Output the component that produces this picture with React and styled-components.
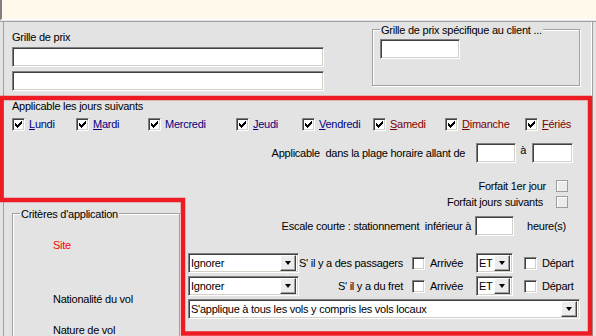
import styled, { createGlobalStyle } from "styled-components";

const GlobalStyle = createGlobalStyle`
  html, body {
    margin: 0;
    padding: 0;
    background: #e3e3e3;
  }
  * {
    box-sizing: border-box;
  }
`;

// classic 7x7 windows tick
const TICK = [
  "......X",
  ".....XX",
  "X...XXX",
  "XX.XXX.",
  "XXXXX..",
  ".XXX...",
  "..X....",
];

const tickPath = TICK.map((row, y) =>
  row
    .split("")
    .map((c, x) => (c === "X" ? `M${x + 2} ${y + 2}h1v1h-1z` : ""))
    .join("")
).join("");

const days = [
  { name: "Lundi", width: 64, key: true },
  { name: "Mardi", width: 72, key: true },
  { name: "Mercredi", width: 88, key: false },
  { name: "Jeudi", width: 66, key: true },
  { name: "Vendredi", width: 71, key: true },
  { name: "Samedi", width: 72, key: true, weekend: true },
  { name: "Dimanche", width: 80, key: true, weekend: true },
  { name: "Fériés", width: 60, key: true, weekend: true },
];

function CheckBox({ checked }) {
  return (
    <Check>
      {checked && (
        <svg width="11" height="11" viewBox="0 0 11 11">
          <path d={tickPath} fill="#000" />
        </svg>
      )}
    </Check>
  );
}

function Select({ width, children }) {
  return (
    <SelectBox $width={width}>
      <SelectText>{children}</SelectText>
      <DropButton>
        <Arrow />
      </DropButton>
    </SelectBox>
  );
}

function ConditionRow({ label, first }) {
  return (
    <SelectRow $first={first}>
      <Select width={111}>Ignorer</Select>
      <CondLabel>{label}</CondLabel>
      <CheckSpacer $left={9}>
        <CheckBox />
      </CheckSpacer>
      <SmallLabel $width={46}>Arrivée</SmallLabel>
      <Select width={37}>ET</Select>
      <CheckSpacer $left={11}>
        <CheckBox />
      </CheckSpacer>
      <SmallLabel>Départ</SmallLabel>
    </SelectRow>
  );
}

export default function App() {
  return (
    <Screen>
      <GlobalStyle />
      <TopStrip />
      <Separator />
      <Body>
        <TopSection>
          <PriceColumn>
            <FieldLabel>Grille de prix</FieldLabel>
            <TextBox $width={312} />
            <TextBox $width={312} />
          </PriceColumn>
          <Group $width={209} $bottom={26}>
            <Legend>Grille de prix spécifique au client ...</Legend>
            <TextBox $width={80} />
          </Group>
        </TopSection>

        <DaysTitle>Applicable les jours suivants</DaysTitle>
        <DayRow>
          {days.map((d) => (
            <DayItem key={d.name} $width={d.width}>
              <CheckBox checked />
              <DayName $weekend={d.weekend}>
                {d.key ? (
                  <>
                    <u>{d.name[0]}</u>
                    {d.name.slice(1)}
                  </>
                ) : (
                  d.name
                )}
              </DayName>
            </DayItem>
          ))}
        </DayRow>

        <TimeRow>
          <Text>{"Applicable  dans la plage horaire allant de"}</Text>
          <TextBox $width={40} />
          <Raised>à</Raised>
          <TextBox $width={41} />
        </TimeRow>

        <BottomSection>
          <CriteriaColumn>
            <Group $width={168} $bottom={0} $tall>
              <Legend>Critères d'application</Legend>
              <CriteriaLabel $top={16} $red>
                Site
              </CriteriaLabel>
              <CriteriaLabel $top={41}>Nationalité du vol</CriteriaLabel>
              <CriteriaLabel $top={18}>Nature de vol</CriteriaLabel>
            </Group>
          </CriteriaColumn>

          <RightColumn>
            <FlagRow $gap={10}>
              <Text>Forfait 1er jour</Text>
              <DisabledCheck />
            </FlagRow>
            <FlagRow $gap={13} $top={2}>
              <Text>Forfait jours suivants</Text>
              <DisabledCheck />
            </FlagRow>
            <EscaleRow>
              <Text>{"Escale courte : stationnement  inférieur à"}</Text>
              <TextBox $width={39} />
              <Text>heure(s)</Text>
            </EscaleRow>
            <ConditionRow label="S' il y a des passagers" first />
            <ConditionRow label="S' il y a du fret" />
            <SelectRow>
              <Select width={392}>
                S'applique à tous les vols y compris les vols locaux
              </Select>
            </SelectRow>
          </RightColumn>
        </BottomSection>
      </Body>

      <Highlight width="596" height="336" viewBox="0 0 596 336">
        <polygon
          points="1.5,98 590,98 590,333.5 183,333.5 183,200 1.5,200"
          fill="none"
          stroke="#ed1c24"
          strokeWidth="4.5"
        />
      </Highlight>
    </Screen>
  );
}

const Screen = styled.div`
  position: relative;
  width: 596px;
  height: 336px;
  overflow: hidden;
  background: #e3e3e3;
  font-family: "Liberation Sans", Arial, sans-serif;
  font-size: 11px;
  line-height: 13px;
  letter-spacing: -0.25px;
  color: #000;
`;

const TopStrip = styled.div`
  height: 20px;
  background: #fff9ec;
  border-left: 2px solid #808080;
  border-bottom: 1px solid #fff;
`;

const Separator = styled.div`
  height: 2px;
  border-bottom: 1px solid #a0a0a0;
`;

const Body = styled.div`
  margin: 0 3px;
  height: 314px;
  border-left: 1px solid #a0a0a0;
  border-right: 1px solid #a0a0a0;
  box-shadow: inset -1px 0 #fff;
  padding: 0 12px 0 8px;
`;

const TopSection = styled.div`
  display: flex;
  align-items: flex-start;
  gap: 48px;
`;

const PriceColumn = styled.div`
  display: flex;
  flex-direction: column;
  gap: 4px;
  margin-top: 9px;
`;

const FieldLabel = styled.div`
  margin-bottom: -1px;
`;

const TextBox = styled.div`
  width: ${(p) => p.$width}px;
  height: 20px;
  flex: none;
  background: #fff;
  border: 1px solid;
  border-color: #808080 #fff #fff #808080;
  box-shadow: inset 1px 1px #404040, inset -1px -1px #d4d0c8;
`;

const Group = styled.fieldset`
  margin: 0;
  width: ${(p) => p.$width}px;
  height: ${(p) => (p.$tall ? "140px" : "auto")};
  padding: 2px 0 ${(p) => p.$bottom}px 7px;
  border: 1px solid #a0a0a0;
  box-shadow: inset 1px 1px #fff, 1px 1px #fff;
  min-width: 0;
`;

const Legend = styled.legend`
  padding: 2px 1px 0;
  margin: 0;
  line-height: 13px;
  background: #e3e3e3;
  white-space: nowrap;
`;

const DaysTitle = styled.div`
  margin-top: 9px;
`;

const DayRow = styled.div`
  display: flex;
  margin-top: 5px;
`;

const DayItem = styled.div`
  width: ${(p) => p.$width}px;
  flex: none;
  display: flex;
  align-items: center;
  gap: 4px;
`;

const DayName = styled.span`
  color: ${(p) => (p.$weekend ? "#800000" : "#000080")};
  white-space: nowrap;
`;

const Check = styled.div`
  width: 13px;
  height: 13px;
  flex: none;
  background: #fff;
  border: 1px solid;
  border-color: #808080 #fff #fff #808080;
  box-shadow: inset 1px 1px #404040, inset -1px -1px #d4d0c8;

  svg {
    display: block;
  }
`;

const DisabledCheck = styled.div`
  width: 12px;
  height: 12px;
  flex: none;
  background: #ececec;
  border: 1px solid #9c9c9c;
  box-shadow: inset 1px 1px #fff;
`;

const Text = styled.span`
  white-space: pre;
`;

const TimeRow = styled.div`
  display: flex;
  justify-content: flex-end;
  align-items: center;
  margin-top: 12px;
  padding-right: 7px;

  > span:first-child {
    margin-right: 11px;
  }
`;

const Raised = styled.span`
  align-self: flex-start;
  margin: 1px 6px 0 4px;
`;

const BottomSection = styled.div`
  display: flex;
  gap: 8px;
  margin-top: 16px;
`;

const CriteriaColumn = styled.div`
  width: 168px;
  flex: none;
  padding-top: 27px;
`;

const CriteriaLabel = styled.div`
  margin: ${(p) => p.$top}px 0 0 33px;
  color: ${(p) => (p.$red ? "#ff0000" : "#000")};
`;

const RightColumn = styled.div`
  width: 392px;
  flex: none;
  display: flex;
  flex-direction: column;
`;

const FlagRow = styled.div`
  display: flex;
  justify-content: flex-end;
  align-items: center;
  gap: ${(p) => p.$gap}px;
  height: 14px;
  margin-top: ${(p) => p.$top || 0}px;
  padding-right: 12px;
`;

const EscaleRow = styled.div`
  display: flex;
  justify-content: flex-end;
  align-items: center;
  gap: 4px;
  margin-top: 7px;
  padding-right: 14px;

  > span:last-child {
    margin-left: 9px;
  }
`;

const SelectRow = styled.div`
  display: flex;
  align-items: center;
  margin-top: ${(p) => (p.$first ? 17 : 3)}px;
`;

const SelectBox = styled.div`
  width: ${(p) => p.$width}px;
  height: 20px;
  flex: none;
  display: flex;
  align-items: center;
  background: #fff;
  border: 1px solid;
  border-color: #808080 #fff #fff #808080;
  box-shadow: inset 1px 1px #404040, inset -1px -1px #d4d0c8;
  padding: 2px;
`;

const SelectText = styled.span`
  flex: 1;
  min-width: 0;
  white-space: nowrap;
  overflow: hidden;
`;

const DropButton = styled.div`
  width: 16px;
  height: 16px;
  flex: none;
  display: flex;
  align-items: center;
  justify-content: center;
  background: #ececec;
  border: 1px solid;
  border-color: #fff #404040 #404040 #fff;
  box-shadow: inset -1px -1px #a0a0a0;
`;

const Arrow = styled.span`
  width: 0;
  height: 0;
  border-left: 3.5px solid transparent;
  border-right: 3.5px solid transparent;
  border-top: 4px solid #000;
`;

const CondLabel = styled.span`
  width: 104px;
  flex: none;
  text-align: right;
  white-space: nowrap;
`;

const CheckSpacer = styled.span`
  margin-left: ${(p) => p.$left}px;
  display: flex;
`;

const SmallLabel = styled.span`
  margin-left: 5px;
  width: ${(p) => (p.$width ? `${p.$width}px` : "auto")};
  flex: none;
  white-space: nowrap;
`;

const Highlight = styled.svg`
  position: absolute;
  top: 0;
  left: 0;
  pointer-events: none;
`;
